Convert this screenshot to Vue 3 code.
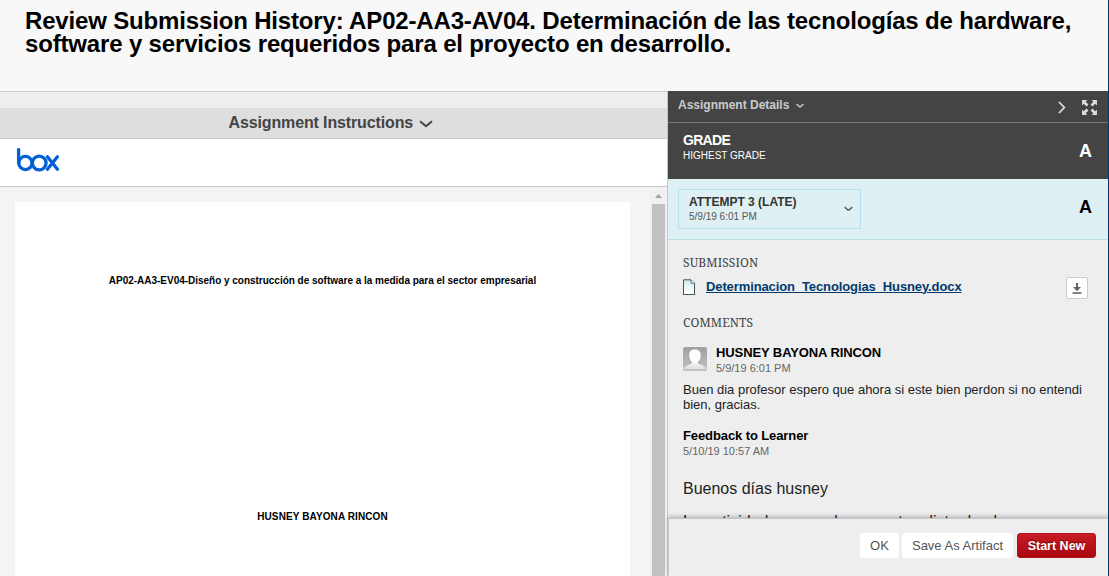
<script setup>
const arrows = ['M1 6V1H6L4.4 2.6L7 5.2L5.2 7L2.6 4.4Z', 'M15 6V1H10L11.6 2.6L9 5.2L10.8 7L13.4 4.4Z', 'M1 10V15H6L4.4 13.4L7 10.8L5.2 9L2.6 11.6Z', 'M15 10V15H10L11.6 13.4L9 10.8L10.8 9L13.4 11.6Z']
</script>

<template>
  <div class="page">
    <header class="title"><h1>Review Submission History: AP02-AA3-AV04. Determinación de las tecnologías de hardware,<br><span>software y servicios requeridos para el proyecto en desarrollo.</span></h1></header>
    <main>
      <section class="viewer">
        <div class="strip"></div>
        <div class="instructions"><span>Assignment Instructions</span>
          <svg width="14" height="8" viewBox="0 0 14 8"><path d="M1 1.2L7 6.3L13 1.2" fill="none" stroke="#444" stroke-width="2" /></svg>
        </div>
        <div class="brand">
          <svg width="44" height="24" viewBox="0 0 44 24" fill="none" stroke="#0061d5" stroke-width="3.3" stroke-linecap="round" stroke-linejoin="round">
            <path d="M2.6 1.6V15" /><circle cx="9.4" cy="15" r="6.6" /><circle cx="23.2" cy="15" r="6.9" /><path d="M31.4 8.8L36.4 15L41.4 21.2M41.4 8.8L31.4 21.2" />
          </svg>
        </div>
        <div class="preview">
          <div class="paper"><p class="doc">AP02-AA3-EV04-Diseño y construcción de software a la medida para el sector empresarial</p><p class="author">HUSNEY BAYONA RINCON</p></div>
          <div class="scroll"><svg width="17" height="17" viewBox="0 0 17 17"><path d="M5 11L8.5 7L12 11Z" fill="#a3a3a3" /></svg><i></i></div>
        </div>
      </section>
      <aside>
        <div class="details">
          <span>Assignment Details</span>
          <svg class="chev" width="8" height="6" viewBox="0 0 8 6"><path d="M.5 1L4 4L7.5 1" fill="none" stroke="#ccc" stroke-width="1.5" /></svg>
          <svg class="next" width="8" height="13" viewBox="0 0 8 13"><path d="M1 1L6.3 6.5L1 12" fill="none" stroke="#ddd" stroke-width="1.8" /></svg>
          <svg class="expand" width="17" height="17" viewBox="0 0 16 16"><path v-for="d in arrows" :key="d" :d="d" fill="#ddd" /></svg>
        </div>
        <div class="grade"><div><b>GRADE</b><small>HIGHEST GRADE</small></div><strong>A</strong></div>
        <div class="attempt">
          <div class="select"><div><b>ATTEMPT 3 (LATE)</b><small>5/9/19 6:01 PM</small></div>
            <svg width="9" height="6" viewBox="0 0 9 6"><path d="M.7 1L3.6 3.7H5.4L8.3 1" fill="none" stroke="#555" stroke-width="1.4" /></svg></div>
          <strong>A</strong>
        </div>
        <div class="body">
          <h2>SUBMISSION</h2>
          <div class="file">
            <svg width="14" height="17" viewBox="0 0 14 17"><defs><linearGradient id="sheet" x2="0" y2="1"><stop stop-color="#ccebeb" /><stop offset=".8" stop-color="#fff" /></linearGradient></defs><path d="M0 15.5H14" stroke="#b7c3c3" /><path d="M1.5 .8H9L12.5 4.3V15.5H1.5Z" fill="url(#sheet)" stroke="#3c5656" /><path d="M9 1V4.3H12.5" fill="#fff" stroke="#3c5656" stroke-width=".8" /></svg>
            <a>Determinacion_Tecnologias_Husney.docx</a>
            <span class="download"><svg width="10" height="12" viewBox="0 0 10 12"><path d="M4 0H6V4H9L5 8.2L1 4H4Z" fill="#666" /><path d="M.5 10H9.5" stroke="#777" stroke-width="1.8" /></svg></span>
          </div>
          <h2 class="comments">COMMENTS</h2>
          <div class="person">
            <svg width="24" height="24" viewBox="0 0 24 24"><defs><linearGradient id="avatar" x2="0" y2="1"><stop stop-color="#a0a0a0" /><stop offset="1" stop-color="#c2c2c2" /></linearGradient><linearGradient id="bust" x2="0" y2="1"><stop offset=".6" stop-color="#fff" /><stop offset="1" stop-color="#ddd" /></linearGradient></defs><rect width="24" height="24" rx="2" fill="url(#avatar)" /><path d="M12 2.5C7.8 2.2 6 5 6.2 8.5C6.3 11.4 7.2 13.2 8.8 14.6V16.6C6 18 2.5 18.2 1 22H23C21.5 18.2 17.5 18 15 16.6V14.6C16.8 13.2 17.7 11.4 17.7 8.5C17.8 5 16 2.5 12 2.5Z" fill="url(#bust)" /></svg>
            <div><b>HUSNEY BAYONA RINCON</b><small>5/9/19 6:01 PM</small></div>
          </div>
          <p class="comment">Buen dia profesor espero que ahora si este bien perdon si no entendi<br><span>bien, gracias.</span></p>
          <div class="feedback"><b>Feedback to Learner</b><small>5/10/19 10:57 AM</small></div>
          <p class="reply">Buenos días husney</p>
          <p class="reply">La actividad no cumple con estos dicto de el</p>
        </div>
        <footer><button>OK</button><button class="save">Save As Artifact</button><button class="start">Start New</button></footer>
      </aside>
    </main>
  </div>
</template>

<style>
body { margin: 0; overflow: hidden; }
</style>
<style scoped>
* { box-sizing: border-box; }
.page { width: 1109px; height: 576px; overflow: hidden; display: flex; flex-direction: column; background: #f8f8f8; border-right: 1px solid #003567; font-family: "Liberation Sans", Arial, sans-serif; }
h1, h2, p { margin: 0; font-weight: normal; }
b, small { display: block; white-space: nowrap; }
svg { flex: none; display: block; }
.title { height: 91px; padding: 9px 0 0 25px; }
h1 { font-size: 24px; line-height: 23px; font-weight: bold; white-space: nowrap; letter-spacing: -.163px; }
main { height: 485px; display: flex; }
.viewer { width: 668px; flex: none; border-top: 1px solid #ccc; border-right: 1px solid #c7c7c7; display: flex; flex-direction: column; }
.strip { height: 16px; flex: none; background: #eee; }
.instructions { height: 31px; flex: none; background: #dedede; border-bottom: 1px solid #c9c9c9; display: flex; align-items: center; padding-left: 228.5px; gap: 6px; font-size: 16px; font-weight: bold; color: #444; letter-spacing: -.13px; }
.instructions span { margin-top: -1px; }
.instructions svg { margin-top: 1px; }
.brand { height: 48px; flex: none; background: #fff; border-bottom: 1px solid #c9c9c9; padding: 9px 0 0 16px; }
.preview { flex: 1; min-height: 0; overflow: hidden; background: #f4f4f4; display: flex; justify-content: space-between; }
.paper { width: 615px; margin: 15px 0 0 15px; background: #fff; font-size: 10px; line-height: 12px; text-align: center; padding-top: 73px; white-space: nowrap; }
.paper p { font-weight: bold; }
.doc { letter-spacing: -.02px; }
.author { margin-top: 224px; letter-spacing: .1px; }
.scroll { width: 17px; background: #f1f1f1; }
.scroll i { display: block; width: 13px; height: 380px; margin-left: 2px; background: #c1c1c1; }
aside { flex: 1; min-width: 0; background: #eee; display: flex; flex-direction: column; }
.details { height: 32px; flex: none; background: #444; border-bottom: 1px solid #777; display: flex; align-items: center; padding: 0 10px; color: #ccc; font-size: 12px; font-weight: bold; }
.details span { margin-top: -4px; }
.chev { margin: -2px 0 0 7px; }
.next { margin-left: auto; margin-right: 15px; margin-top: 1px; }
.expand { margin-top: 1px; }
.grade { height: 56px; flex: none; background: #444; color: #fff; display: flex; justify-content: space-between; padding: 10px 16px 0 15px; }
.grade b { font-size: 14px; line-height: 15px; letter-spacing: -.7px; }
.grade small { font-size: 10px; line-height: 16px; }
.grade strong, .attempt strong { font-size: 18px; line-height: 20px; }
.grade strong { margin-top: 8px; }
.attempt { height: 61px; flex: none; background: #dff0f4; border-bottom: 1px solid #bde1e7; display: flex; justify-content: space-between; padding: 10px 16px 0 10px; }
.attempt strong { margin-top: 8px; color: #000; }
.select { width: 183px; height: 40px; border: 1px solid #b6e2ef; display: flex; align-items: center; justify-content: space-between; padding: 0 7px 0 10px; color: #333; }
.select b { font-size: 12px; line-height: 14px; }
.select small { font-size: 10px; line-height: 14px; color: #555; position: relative; top: 1px; }
.body { flex: 1; min-height: 0; overflow: hidden; padding: 16px 15px 0; }
h2 { font-family: "Noto Serif", "Liberation Serif", serif; font-size: 12px; line-height: 14px; color: #444; letter-spacing: .1px; }
.file { display: flex; height: 22px; margin-top: 7px; align-items: center; }
.file svg { margin: -1px 0 0 -1px; }
.file a { margin: -4px 0 0 10px; color: #003b6f; font-size: 13px; font-weight: bold; text-decoration: underline; letter-spacing: -.11px; }
.file .download { margin-left: auto; margin-right: 5px; width: 22px; height: 22px; background: #fff; border: 1px solid #ccc; border-radius: 2px; display: flex; align-items: center; justify-content: center; }
.file .download svg { margin: 2px 0 0; }
.comments { margin-top: 17px; }
.person { display: flex; gap: 9px; margin-top: 15px; }
.person svg { margin-top: 2px; }
.person b, .feedback b { font-size: 13px; line-height: 15px; letter-spacing: -.1px; }
.person small, .feedback small { font-size: 11px; line-height: 16px; color: #666; }
.comment { font-size: 13px; line-height: 15px; margin-top: 6px; white-space: nowrap; color: #222; }
.feedback { margin-top: 16px; }
.reply { font-size: 16px; line-height: 18px; margin-top: 15px; white-space: nowrap; color: #222; }
.feedback + .reply { margin-top: 21px; }
footer { height: 58px; flex: none; width: 441px; background: #eee; border-top: 1px solid #c4c4c4; border-left: 1px solid #ccc; box-shadow: 0 -2px 4px rgba(0,0,0,.2); display: flex; padding: 14px 13px 0 0; justify-content: flex-end; position: relative; }
button { height: 25px; width: 39px; margin: 0 3px 0 0; padding: 0; border: 0; border-radius: 3px; background: #fff; color: #555; font: 13px "Liberation Sans", sans-serif; white-space: nowrap; }
.save { width: 111px; margin-right: 4px; }
.start { width: 79px; margin-right: 0; color: #fff; font-weight: bold; font-size: 12.5px; background: linear-gradient(#c91c25, #a9070e); border: 1px solid #b3131a; text-shadow: 0 -1px 1px #7a0000; }
</style>
